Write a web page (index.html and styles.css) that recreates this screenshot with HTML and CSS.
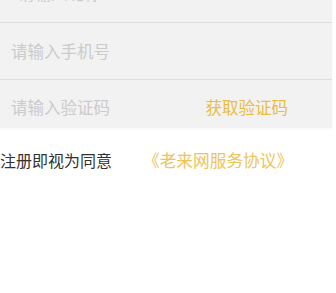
FILE: index.html
```html
<!DOCTYPE html>
<html lang="zh-CN">
<head>
    <meta charset="UTF-8">
    <meta name="viewport" content="width=device-width, initial-scale=1.0">
    <title>注册</title>
    <link rel="stylesheet" href="styles.css">
</head>
<body>
    <!-- Register form -->
    <div class="form-panel">
        <div class="form-row first">
            <span class="placeholder">请输入昵称</span>
        </div>
        <div class="form-row">
            <span class="placeholder">请输入手机号</span>
        </div>
        <div class="form-row last">
            <span class="placeholder">请输入验证码</span>
            <span class="get-code">获取验证码</span>
        </div>
    </div>

    <!-- Agreement -->
    <div class="agreement">
        <span class="agree-text">注册即视为同意</span>
        <span class="agree-link">《老来网服务协议》</span>
    </div>
</body>
</html>
```

FILE: styles.css
```css
/* Reset */
body, div, span {
    margin: 0;
    padding: 0;
}

body {
    background-color: #fff;
    color: #333;
    font-family: "Noto Sans CJK SC", "Noto Sans", sans-serif;
    font-size: 16px;
    overflow: hidden;
}

/* Form panel */
.form-panel {
    background-color: #f2f2f2;
    margin-top: -37px;
    margin-right: 4px;
    box-shadow: 0 1px 3px rgba(0, 0, 0, 0.04);
}

.form-row {
    height: 56px;
    border-bottom: 1px solid #dedede;
    display: flex;
    align-items: center;
    justify-content: space-between;
    padding: 0 44px 0 11px;
}

.form-row.first {
    height: 59px;
    padding-left: 18px;
}

.form-row.last {
    height: 48px;
    border-bottom: none;
    padding-top: 6px;
    box-sizing: border-box;
}

.placeholder {
    color: #cbcbcb;
    font-size: 16.5px;
    line-height: 20px;
}

.get-code {
    color: #e9bd45;
    font-size: 16.5px;
    line-height: 20px;
}

/* Agreement line */
.agreement {
    display: flex;
    align-items: center;
    margin-top: 22px;
    line-height: 20px;
}

.agree-text {
    color: #333;
    width: 143px;
}

.agree-link {
    color: #edc458;
    font-size: 16.7px;
}
```
